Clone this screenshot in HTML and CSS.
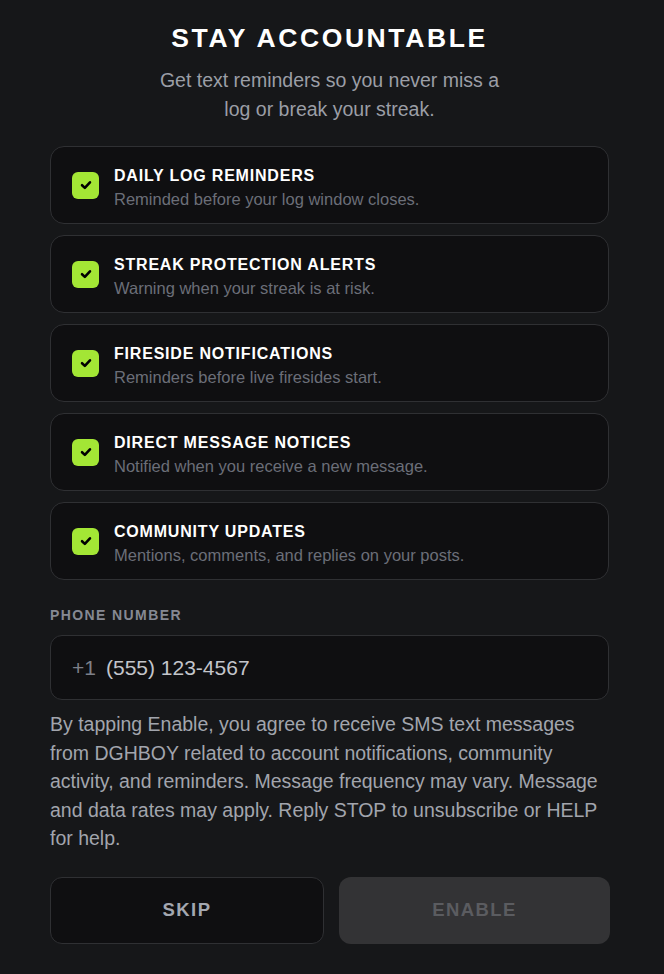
FILE: index.html
```html
<!DOCTYPE html>
<html>
<head>
<meta charset="utf-8">
<link rel="stylesheet" href="styles.css">
</head>
<body>
<main class="screen">
  <h1 class="title">STAY ACCOUNTABLE</h1>
  <p class="subtitle">Get text reminders so you never miss a<br>log or break your streak.</p>

  <ul class="options">
    <li class="option">
      <span class="check"><svg viewBox="0 0 12 12" width="14" height="14"><path d="M2.6 6.2 L5 8.5 L9.4 3.7" fill="none" stroke="#000" stroke-width="2.2" stroke-linecap="round" stroke-linejoin="round"/></svg></span>
      <div class="option-text">
        <div class="option-title">DAILY LOG REMINDERS</div>
        <div class="option-desc">Reminded before your log window closes.</div>
      </div>
    </li>
    <li class="option">
      <span class="check"><svg viewBox="0 0 12 12" width="14" height="14"><path d="M2.6 6.2 L5 8.5 L9.4 3.7" fill="none" stroke="#000" stroke-width="2.2" stroke-linecap="round" stroke-linejoin="round"/></svg></span>
      <div class="option-text">
        <div class="option-title">STREAK PROTECTION ALERTS</div>
        <div class="option-desc">Warning when your streak is at risk.</div>
      </div>
    </li>
    <li class="option">
      <span class="check"><svg viewBox="0 0 12 12" width="14" height="14"><path d="M2.6 6.2 L5 8.5 L9.4 3.7" fill="none" stroke="#000" stroke-width="2.2" stroke-linecap="round" stroke-linejoin="round"/></svg></span>
      <div class="option-text">
        <div class="option-title">FIRESIDE NOTIFICATIONS</div>
        <div class="option-desc">Reminders before live firesides start.</div>
      </div>
    </li>
    <li class="option">
      <span class="check"><svg viewBox="0 0 12 12" width="14" height="14"><path d="M2.6 6.2 L5 8.5 L9.4 3.7" fill="none" stroke="#000" stroke-width="2.2" stroke-linecap="round" stroke-linejoin="round"/></svg></span>
      <div class="option-text">
        <div class="option-title">DIRECT MESSAGE NOTICES</div>
        <div class="option-desc">Notified when you receive a new message.</div>
      </div>
    </li>
    <li class="option">
      <span class="check"><svg viewBox="0 0 12 12" width="14" height="14"><path d="M2.6 6.2 L5 8.5 L9.4 3.7" fill="none" stroke="#000" stroke-width="2.2" stroke-linecap="round" stroke-linejoin="round"/></svg></span>
      <div class="option-text">
        <div class="option-title">COMMUNITY UPDATES</div>
        <div class="option-desc">Mentions, comments, and replies on your posts.</div>
      </div>
    </li>
  </ul>

  <div class="field">
    <div class="label">PHONE NUMBER</div>
    <div class="input">
      <span class="prefix">+1</span>
      <span class="phone">(555) 123-4567</span>
    </div>
  </div>

  <p class="consent">By tapping Enable, you agree to receive SMS text messages from DGHBOY related to account notifications, community activity, and reminders. Message frequency may vary. Message and data rates may apply. Reply STOP to unsubscribe or HELP for help.</p>

  <div class="actions">
    <button class="btn btn-skip">SKIP</button>
    <button class="btn btn-enable">ENABLE</button>
  </div>
</main>
</body>
</html>
```

FILE: styles.css
```css
* { box-sizing: border-box; }
html, body {
  margin: 0;
  padding: 0;
  background: #161719;
}
body {
  font-family: "Liberation Sans", Arial, sans-serif;
  color: #fff;
}
.screen {
  padding: 22px 55px 0 50px;
  display: flex;
  flex-direction: column;
}
.title {
  margin: 0;
  text-align: center;
  font-size: 26.5px;
  font-weight: 700;
  letter-spacing: 2.6px;
  line-height: 32px;
  color: #fff;
}
.subtitle {
  margin: 12px 0 0;
  text-align: center;
  font-size: 19.5px;
  line-height: 29px;
  color: #9b9ea6;
}
.options {
  list-style: none;
  margin: 22px 0 0;
  padding: 0;
  display: flex;
  flex-direction: column;
  gap: 11px;
}
.option {
  height: 78px;
  background: #0f0f11;
  border: 1.5px solid #2f3033;
  border-radius: 14px;
  display: flex;
  align-items: center;
  padding: 0 20px 0 21px;
  gap: 15px;
}
.check {
  width: 27px;
  height: 27px;
  border-radius: 6px;
  background: #a3e635;
  display: flex;
  align-items: center;
  justify-content: center;
  flex: none;
}
.option-text {
  display: flex;
  flex-direction: column;
  gap: 3px;
  padding-top: 4px;
}
.option-title {
  font-size: 16px;
  font-weight: 700;
  letter-spacing: 0.8px;
  line-height: 20px;
  color: #fff;
}
.option-desc {
  font-size: 16.5px;
  line-height: 20px;
  color: #6b6e78;
}
.field {
  margin-top: 27px;
}
.label {
  font-size: 14px;
  font-weight: 700;
  letter-spacing: 1.4px;
  color: #868993;
  line-height: 16px;
}
.input {
  margin-top: 12px;
  height: 65px;
  background: #0f0f11;
  border: 1.5px solid #2f3033;
  border-radius: 12px;
  display: flex;
  align-items: center;
  padding: 0 21px;
  gap: 10px;
  font-size: 21px;
}
.prefix {
  color: #7d8089;
}
.phone {
  color: #c3c5cb;
}
.consent {
  margin: 10px 0 0;
  font-size: 19.5px;
  line-height: 28.6px;
  color: #a2a5ad;
}
.actions {
  margin-top: 24px;
  display: grid;
  grid-template-columns: 274px 271px;
  gap: 15px;
}
.btn {
  height: 67px;
  border-radius: 12px;
  font-family: "Liberation Sans", Arial, sans-serif;
  font-size: 18.5px;
  font-weight: 700;
  letter-spacing: 1.4px;
}
.btn-skip {
  background: #0f0f11;
  border: 1.5px solid #2f3033;
  color: #a3a7b0;
}
.btn-enable {
  background: #333335;
  border: none;
  color: #5b5c60;
}
```
